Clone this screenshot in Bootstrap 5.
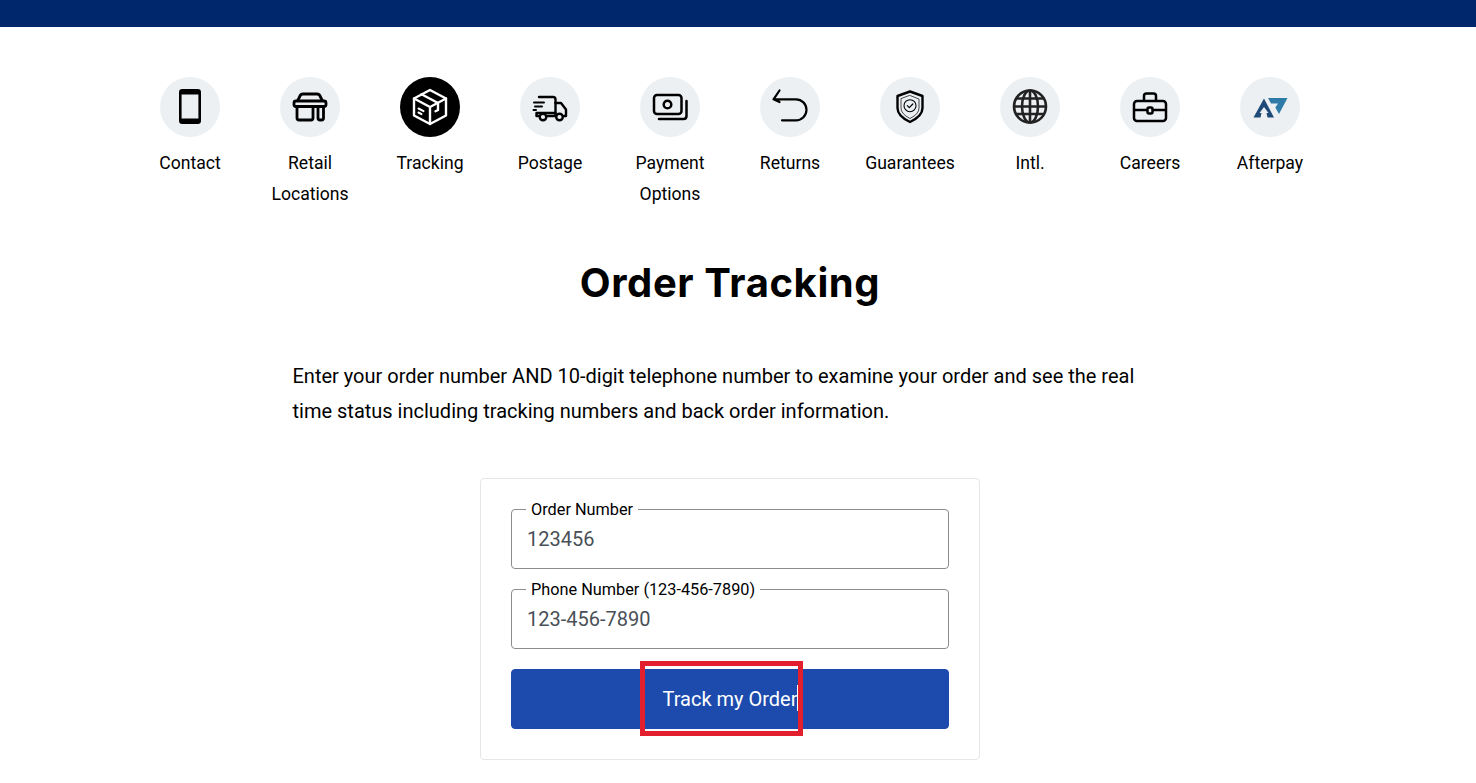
<!DOCTYPE html>
<html lang="en">

<head>
    <meta charset="UTF-8">
    <meta name="viewport" content="width=device-width, initial-scale=1.0">
    <title>Order Tracking</title>
    <link href="https://cdn.jsdelivr.net/npm/bootstrap@5.3.3/dist/css/bootstrap.min.css" rel="stylesheet">
    <style>
        body {
            font-family: Roboto, "Liberation Sans", sans-serif;
            color: #000;
            background: #fff;
        }

        .page-wrap {
            width: 1460px;
        }

        .top-strip {
            height: 27px;
            background: #00266b;
        }

        .help-nav {
            padding-top: 50px;
        }

        .help-item {
            width: 120px;
            font-size: 17.6px;
            line-height: 31px;
            color: #000;
            text-decoration: none;
        }

        .help-circle {
            width: 60px;
            height: 60px;
            margin: 0 auto 11px;
            background: #edf0f3;
        }

        .help-circle svg {
            display: block;
            width: 60px;
            height: 60px;
        }

        .help-item.is-current .help-circle {
            background: #000;
        }

        .page-title {
            font-family: Inter, "Open Sans", sans-serif;
            font-size: 40px;
            font-weight: 700;
            letter-spacing: .6px;
            line-height: 46px;
            margin-top: 50px;
            margin-bottom: 0;
        }

        .page-intro {
            width: 875px;
            font-size: 20px;
            line-height: 35px;
            margin: 53px auto 0;
        }

        .track-box {
            width: 500px;
            margin: 49px auto 0;
            padding: 30px;
            border-color: #e6e6e6;
            border-radius: 4px;
        }

        .outline-field {
            height: 60px;
            margin-bottom: 20px;
            border: 1px solid #8c8c8c;
            border-radius: 4px;
        }

        .outline-field label {
            position: absolute;
            top: -10px;
            left: 14px;
            padding: 0 5px;
            font-size: 16.3px;
            line-height: 19px;
            background: #fff;
        }

        .outline-field .form-control {
            height: 58px;
            padding: 0 15px;
            font-size: 20px;
            color: #495057;
            background: transparent;
        }

        .outline-field .form-control::placeholder {
            color: #495057;
            opacity: 1;
        }

        .track-btn {
            height: 60px;
            font-size: 20px;
            background: #1c4bad;
            border-color: #1c4bad;
            border-radius: 4px;
        }

        .mark-box {
            position: absolute;
            left: 129px;
            top: -8px;
            width: 163px;
            height: 75px;
            border: 5px solid #e21f2d;
            pointer-events: none;
        }

        .mark-caret {
            position: absolute;
            left: 286px;
            top: 16px;
            width: 1px;
            height: 26px;
            background: #fff;
        }
    </style>
</head>

<body>
    <div class="top-strip"></div>

    <div class="page-wrap">
        <nav class="help-nav d-flex justify-content-center">
            <a href="#" class="help-item text-center">
                <div class="help-circle rounded-circle">
                    <svg viewBox="0 0 60 60" fill="none" stroke="#000" stroke-width="2.600">
                        <rect x="20.300" y="13.300" width="19.400" height="32.400" rx="2"/>
                        <path d="M20 15.500H40M20 43.500H40" stroke-width="4"/>
                    </svg>
                </div>
                Contact
            </a>
            <a href="#" class="help-item text-center">
                <div class="help-circle rounded-circle">
                    <svg viewBox="0 0 60 60" fill="none" stroke="#000" stroke-width="2.800" stroke-linejoin="round">
                        <path d="M17.500 24 20 19q.8-2 3-2H37q2.200 0 3 2l2.500 5"/>
                        <rect x="14" y="24" width="32" height="5.500" rx="2"/>
                        <path d="M17 29.500V41q0 2 2 2H31q2 0 2-2V29.500"/>
                        <path d="M38 29.500V41q0 2 2 2h1.500q2 0 2-2V29.500"/>
                    </svg>
                </div>
                Retail Locations
            </a>
            <a href="#" class="help-item is-current text-center">
                <div class="help-circle rounded-circle">
                    <svg viewBox="0 0 60 60" fill="none" stroke="#fff" stroke-width="2.400" stroke-linejoin="round" stroke-linecap="round">
                        <path d="M30 13 46 21.500V38.500L30 47 14 38.500V21.500Z"/>
                        <path d="M14 21.500 30 30 46 21.500M30 30V47"/>
                        <path d="M21.500 17.300 38 26V33M38 33l-2.500 1.300"/>
                        <path d="M18.500 31.500l5 2.600M18.500 35.500l3 1.600" stroke-width="2"/>
                    </svg>
                </div>
                Tracking
            </a>
            <a href="#" class="help-item text-center">
                <div class="help-circle rounded-circle">
                    <svg viewBox="0 0 60 60" fill="none" stroke="#000" stroke-width="2.400" stroke-linecap="round" stroke-linejoin="round">
                        <path d="M19 20H33q2.500 0 2.500 2.500V39H28"/>
                        <path d="M35.500 26H41l5 6.500V39H44"/>
                        <path d="M18 39H16.500V36M16.500 36H35.500"/>
                        <circle cx="23" cy="40" r="3.300"/>
                        <circle cx="39.500" cy="40" r="3.300"/>
                        <path d="M14 25.500H24M15 29.500H22M13.500 33H16" stroke-width="2"/>
                    </svg>
                </div>
                Postage
            </a>
            <a href="#" class="help-item text-center">
                <div class="help-circle rounded-circle">
                    <svg viewBox="0 0 60 60" fill="none" stroke="#000" stroke-width="2.500" stroke-linecap="round">
                        <rect x="14" y="18" width="27.500" height="19" rx="3"/>
                        <circle cx="27.500" cy="27.500" r="3.800"/>
                        <path d="M46.500 24V39q0 3-3 3H19"/>
                    </svg>
                </div>
                Payment Options
            </a>
            <a href="#" class="help-item text-center">
                <div class="help-circle rounded-circle">
                    <svg viewBox="0 0 60 60" fill="none" stroke="#000" stroke-width="2.200" stroke-linecap="round" stroke-linejoin="round">
                        <path d="M19.500 13.500 13.500 22.300 19.500 25M13.500 22.300H36a10.500 10.500 0 0 1 0 21H22"/>
                    </svg>
                </div>
                Returns
            </a>
            <a href="#" class="help-item text-center">
                <div class="help-circle rounded-circle">
                    <svg viewBox="0 0 60 60" fill="none" stroke="#000" stroke-linejoin="round" stroke-linecap="round">
                        <path d="M30 14.500 42.500 19V31q0 8-12.500 14Q17.500 39 17.500 31V19Z" stroke-width="2.400"/>
                        <path d="M30 18.500 39 22V31q0 6-9 10.500Q21 37 21 31V22Z" stroke-width=".7"/>
                        <circle cx="30" cy="28.700" r="6" stroke-width="1.100"/>
                        <path d="M27.300 28.700l2 2 3.500-3.700" stroke-width="1.200"/>
                    </svg>
                </div>
                Guarantees
            </a>
            <a href="#" class="help-item text-center">
                <div class="help-circle rounded-circle">
                    <svg viewBox="0 0 60 60" fill="none" stroke="#222" stroke-width="2.600">
                        <circle cx="30" cy="29.500" r="16"/>
                        <ellipse cx="30" cy="29.500" rx="8" ry="16"/>
                        <path d="M30 13.500V45.500M16.500 21.500H43.500M14 29.500H46M16.500 37H43.500"/>
                    </svg>
                </div>
                Intl.
            </a>
            <a href="#" class="help-item text-center">
                <div class="help-circle rounded-circle">
                    <svg viewBox="0 0 60 60" fill="none" stroke="#000" stroke-width="2.500" stroke-linejoin="round">
                        <path d="M24 24V19q0-2.500 2.500-2.500h7Q36 16.500 36 19V24"/>
                        <rect x="14" y="24" width="32" height="20" rx="3"/>
                        <path d="M14 33H27.500M32.500 33H46"/>
                        <rect x="27.500" y="30.500" width="5" height="6" rx="1.500"/>
                    </svg>
                </div>
                Careers
            </a>
            <a href="#" class="help-item text-center">
                <div class="help-circle rounded-circle">
                    <svg viewBox="0 0 60 60">
                        <path fill="#1f4a78" d="M13.500 40.500 24 21.500 34 40.500H27.500L26.500 36H28.500L24 30 19.500 36H21.500L20.500 40.500Z"/>
                        <path fill="#2f7ba8" d="M28 21H47.500L39 37 35.300 30.500 38 26.500H31Z"/>
                    </svg>
                </div>
                Afterpay
            </a>
        </nav>

        <h1 class="page-title text-center">Order Tracking</h1>

        <p class="page-intro">Enter your order number AND 10-digit telephone number to examine your order and see the real time status including tracking numbers and back order information.</p>

        <div class="track-box card">
            <form>
                <div class="outline-field position-relative">
                    <label for="orderNumber">Order Number</label>
                    <input id="orderNumber" type="text" class="form-control border-0 shadow-none" placeholder="123456">
                </div>
                <div class="outline-field position-relative">
                    <label for="phoneNumber">Phone Number (123-456-7890)</label>
                    <input id="phoneNumber" type="text" class="form-control border-0 shadow-none" placeholder="123-456-7890">
                </div>
                <div class="position-relative">
                    <button type="button" class="track-btn btn btn-primary w-100">Track my Order</button>
                    <div class="mark-caret"></div>
                    <div class="mark-box"></div>
                </div>
            </form>
        </div>
    </div>
    <script src="https://cdn.jsdelivr.net/npm/bootstrap@5.3.3/dist/js/bootstrap.bundle.min.js"></script>
</body>

</html>
